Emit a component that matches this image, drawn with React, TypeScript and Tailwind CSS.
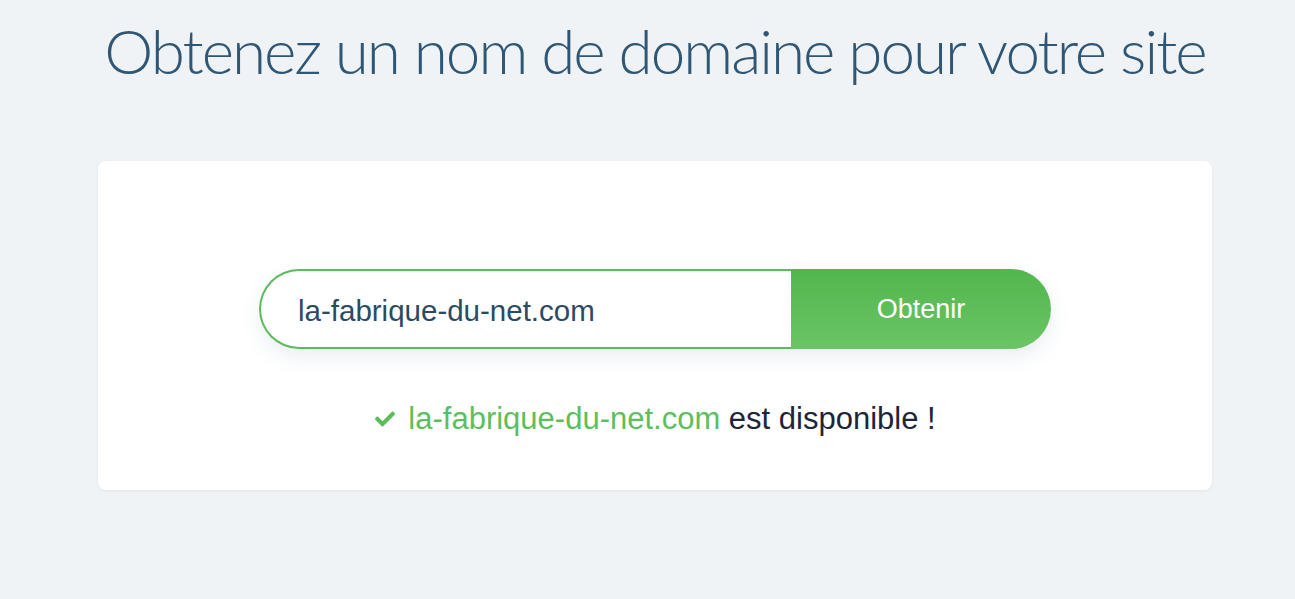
import { FaCheck } from 'react-icons/fa'

export default function App() {
  return (
    <div className="min-h-[599px] w-full bg-[#eff3f6] pt-[17px] font-['Liberation_Sans',Arial,sans-serif]">
      <div className="ml-[98px] w-[1114px]">
        <h1 className="text-center text-[62px] leading-[66px] font-light tracking-[-2px] text-[#2f5775] font-['Lato',sans-serif] whitespace-nowrap">
          Obtenez un nom de domaine pour votre site
        </h1>

        <div className="mt-[78px] h-[329px] rounded-lg bg-white shadow-[0_1px_3px_rgba(0,0,0,0.06)] pt-[108px]">
          <div className="mx-auto flex w-[792px] h-[80px] rounded-full shadow-[0_8px_20px_rgba(80,120,160,0.12)]">
            <div className="flex flex-1 items-center rounded-l-full border-2 border-r-0 border-[#5cbb5a] bg-white pl-[37px] pt-[4px]">
              <span className="text-[29.5px] text-[#2c4a63]">la-fabrique-du-net.com</span>
            </div>
            <button className="w-[260px] rounded-r-full bg-gradient-to-b from-[#52b64d] to-[#6ac566] text-[27px] text-white">
              Obtenir
            </button>
          </div>

          <div className="mt-[54px] flex items-center justify-center gap-[12px] text-[31px] leading-none">
            <FaCheck className="h-[20px] w-[22px] text-[#5cbb5a]" />
            <span>
              <span className="text-[#5cbf5c]">la-fabrique-du-net.com</span>
              <span className="text-[#1c2636]"> est disponible !</span>
            </span>
          </div>
        </div>
      </div>
    </div>
  )
}
